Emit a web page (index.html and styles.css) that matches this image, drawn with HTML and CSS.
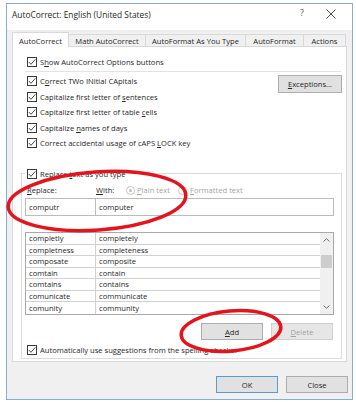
FILE: index.html
```html
<!DOCTYPE html>
<html lang="en">
<head>
<meta charset="utf-8">
<title>AutoCorrect</title>
<link rel="stylesheet" href="styles.css">
</head>
<body>
<div class="dialog">
  <div class="titlebar">
    <span class="title">AutoCorrect: English (United States)</span>
    <span class="help">?</span>
    <span class="xbtn"><svg width="10" height="10" viewBox="0 0 10 10"><path d="M0.5 0.5 L9.5 9.5 M9.5 0.5 L0.5 9.5" stroke="#3a3a3a" stroke-width="0.9" fill="none"/></svg></span>
  </div>
  <div class="client">
    <div class="tabs">
      <div class="tab active tab-ac">AutoCorrect</div>
      <div class="tab tab-math">Math AutoCorrect</div>
      <div class="tab tab-ayt">AutoFormat As You Type</div>
      <div class="tab tab-af">AutoFormat</div>
      <div class="tab tab-act">Actions</div>
    </div>
    <div class="panel">
      <div class="check top-check"><span class="box"><svg width="8" height="8" viewBox="0 0 8 8"><path d="M0.8 4 L3 6.3 L7.3 1.4" stroke="#333" stroke-width="0.9" fill="none"/></svg></span><span>S<u>h</u>ow AutoCorrect Options buttons</span></div>
      <div class="sep"></div>
      <div class="opts">
        <div class="checks">
          <div class="check"><span class="box"><svg width="8" height="8" viewBox="0 0 8 8"><path d="M0.8 4 L3 6.3 L7.3 1.4" stroke="#333" stroke-width="0.9" fill="none"/></svg></span><span>C<u>o</u>rrect TWo INitial CApitals</span></div>
          <div class="check"><span class="box"><svg width="8" height="8" viewBox="0 0 8 8"><path d="M0.8 4 L3 6.3 L7.3 1.4" stroke="#333" stroke-width="0.9" fill="none"/></svg></span><span>Capitalize first letter of <u>s</u>entences</span></div>
          <div class="check"><span class="box"><svg width="8" height="8" viewBox="0 0 8 8"><path d="M0.8 4 L3 6.3 L7.3 1.4" stroke="#333" stroke-width="0.9" fill="none"/></svg></span><span>Capitalize first letter of table <u>c</u>ells</span></div>
          <div class="check"><span class="box"><svg width="8" height="8" viewBox="0 0 8 8"><path d="M0.8 4 L3 6.3 L7.3 1.4" stroke="#333" stroke-width="0.9" fill="none"/></svg></span><span>Capitalize <u>n</u>ames of days</span></div>
          <div class="check"><span class="box"><svg width="8" height="8" viewBox="0 0 8 8"><path d="M0.8 4 L3 6.3 L7.3 1.4" stroke="#333" stroke-width="0.9" fill="none"/></svg></span><span>Correct accidental usage of cAPS <u>L</u>OCK key</span></div>
        </div>
        <button class="btn exc"><u>E</u>xceptions...</button>
      </div>
      <div class="group">
        <div class="check ghead"><span class="box"><svg width="8" height="8" viewBox="0 0 8 8"><path d="M0.8 4 L3 6.3 L7.3 1.4" stroke="#333" stroke-width="0.9" fill="none"/></svg></span><span>Replace <u>t</u>ext as you type</span></div>
        <div class="labels">
          <span class="lbl-r"><u>R</u>eplace:</span>
          <span class="lbl-w"><u>W</u>ith:</span>
          <span class="radio"><span class="dot"></span></span>
          <span class="plain dim"><u>P</u>lain text</span>
          <span class="radio"></span>
          <span class="fmt dim"><u>F</u>ormatted text</span>
        </div>
        <div class="inputs">
          <div class="inp inp1">computr</div>
          <div class="inp inp2">computer</div>
        </div>
        <div class="list">
          <div class="rows">
            <div class="lrow"><span class="c1">completly</span><span class="c2">completely</span></div>
            <div class="lrow"><span class="c1">completness</span><span class="c2">completeness</span></div>
            <div class="lrow"><span class="c1">composate</span><span class="c2">composite</span></div>
            <div class="lrow"><span class="c1">comtain</span><span class="c2">contain</span></div>
            <div class="lrow"><span class="c1">comtains</span><span class="c2">contains</span></div>
            <div class="lrow"><span class="c1">comunicate</span><span class="c2">communicate</span></div>
            <div class="lrow"><span class="c1">comunity</span><span class="c2">community</span></div>
          </div>
          <div class="sbar">
            <span class="sarrow"><svg width="7" height="4" viewBox="0 0 7 4"><path d="M0.5 3.5 L3.5 0.7 L6.5 3.5" stroke="#606060" stroke-width="0.9" fill="none"/></svg></span>
            <span class="track"><span class="thumb"></span></span>
            <span class="sarrow"><svg width="7" height="4" viewBox="0 0 7 4"><path d="M0.5 0.5 L3.5 3.3 L6.5 0.5" stroke="#606060" stroke-width="0.9" fill="none"/></svg></span>
          </div>
        </div>
        <div class="actions">
          <button class="btn"><u>A</u>dd</button>
          <button class="btn disabled"><u>D</u>elete</button>
        </div>
        <div class="check auto"><span class="box"><svg width="8" height="8" viewBox="0 0 8 8"><path d="M0.8 4 L3 6.3 L7.3 1.4" stroke="#333" stroke-width="0.9" fill="none"/></svg></span><span>Automatically use suggestions from the spelling checker</span></div>
      </div>
    </div>
    <div class="footer">
      <button class="btn ok">OK</button>
      <button class="btn">Close</button>
    </div>
  </div>
</div>
<svg class="marks" width="356" height="402" viewBox="0 0 356 402">
  <ellipse cx="97" cy="201" rx="89" ry="29" transform="rotate(-4 97 201)" fill="none" stroke="#e3141c" stroke-width="3.5"/>
  <ellipse cx="231" cy="331" rx="50" ry="20" transform="rotate(-5 231 331)" fill="none" stroke="#e3141c" stroke-width="3.5"/>
</svg>
</body>
</html>
```
FILE: styles.css
```css
* { box-sizing: border-box; }
html, body { margin: 0; padding: 0; }
body {
  width: 356px; height: 402px; overflow: hidden; position: relative;
  background: #fff;
  font-family: "Open Sans", "Noto Sans", sans-serif;
  font-size: 7.6px; color: #262626;
}
u { text-decoration-thickness: 0.6px; text-underline-offset: 1px; }
.dialog {
  margin: 3px 0 0 6px; width: 347px; height: 397px;
  border: 1px solid #86acdb; background: #f0f0f0;
  display: flex; flex-direction: column;
}
.titlebar {
  height: 26px; flex: none; background: #fff;
  display: flex; align-items: flex-start; padding: 5px 0 0 5px;
}
.title { flex: 1; font-size: 8.4px; line-height: 12px; }
.help { width: 12px; text-align: center; font-size: 9px; line-height: 12px; margin: -2px 17px 0 0; color: #555; }
.xbtn { width: 12px; height: 12px; margin: -1px 15px 0 0; display: flex; align-items: center; justify-content: center; }
.client { flex: 1; display: flex; flex-direction: column; }
.tabs { display: flex; align-items: flex-end; height: 14px; margin: 2px 5px 0 5px; flex: none; }
.tab {
  height: 12px; padding-top: 1px; border: 1px solid #d9d9d9; border-bottom: none;
  background: #f0f0f0; display: flex; align-items: center; justify-content: center;
  margin-left: -1px; white-space: nowrap;
}
.tab:first-child { margin-left: 0; }
.tab.active { height: 15px; padding-top: 2px; background: #fff; margin-bottom: -1px; position: relative; z-index: 1; }
.tab-ac { width: 57px; }
.tab-math { width: 78px; }
.tab-ayt { width: 101px; }
.tab-af { width: 59px; }
.tab-act { width: 43px; }
.panel {
  height: 316px; flex: none; margin: 0 5px; border: 1px solid #d9d9d9; background: #fff;
  padding: 7px 4px 0 0; display: flex; flex-direction: column;
}
.check { display: flex; align-items: center; white-space: nowrap; }
.box {
  width: 10px; height: 10px; border: 1px solid #3a3a3a; background: #fff; flex: none;
  display: flex; align-items: center; justify-content: center; margin-right: 3px;
}
.box svg { display: block; }
.top-check { margin-left: 14px; height: 16px; }
.sep { height: 1px; background: #e3e3e3; margin: 1px 1px 0 12px; flex: none; }
.opts { display: flex; align-items: flex-start; margin-top: 1.25px; }
.checks { margin-left: 14px; display: flex; flex-direction: column; }
.checks .check { height: 15.5px; }
.btn {
  font: inherit; color: #262626; height: 17px; width: 62px; padding: 0;
  background: #e1e1e1; border: 1px solid #adadad;
  display: flex; align-items: center; justify-content: center;
}
.exc { width: 64px; height: 18px; margin: 2px 0 0 auto; }
.group {
  margin: 22.25px 0 0 8px; height: 186px; flex: none;
  border: 1px solid #dcdcdc; padding: 0 7px 0 3px;
  display: flex; flex-direction: column;
}
.ghead { align-self: flex-start; margin-top: -8px; height: 16px; background: #fff; padding: 0 2px; }
.labels { display: flex; align-items: center; height: 16px; padding-left: 2px; white-space: nowrap; }
.lbl-r { width: 69px; }
.lbl-w { width: 30px; }
.radio {
  width: 9px; height: 9px; border-radius: 50%; border: 1px solid #c4c4c4; flex: none;
  display: flex; align-items: center; justify-content: center;
}
.dot { width: 3px; height: 3px; border-radius: 50%; background: #bdbdbd; }
.dim { color: #a3a3a3; }
.plain { width: 41px; margin-left: 2px; }
.fmt { margin-left: 3px; }
.inputs { display: flex; height: 18px; flex: none; }
.inp { border: 1px solid #bcbcbc; background: #fff; display: flex; align-items: center; padding-left: 3px; }
.inp1 { width: 71px; }
.inp2 { flex: 1; border-left: none; padding-left: 3px; }
.list { margin-top: 16px; height: 82.5px; flex: none; border: 1px solid #a9a9a9; display: flex; background: #fff; }
.rows { flex: 1; display: flex; flex-direction: column; }
.lrow { display: flex; height: 11.5px; border-bottom: 1px solid #d0d0d0; }
.lrow:last-child { border-bottom: none; }
.c1 { width: 70px; border-right: 1px solid #d0d0d0; padding-left: 3px; display: flex; align-items: center; }
.c2 { flex: 1; padding-left: 3px; display: flex; align-items: center; }
.sbar { width: 13px; background: #f0f0f0; display: flex; flex-direction: column; }
.sarrow { height: 14px; display: flex; align-items: center; justify-content: center; }
.sarrow svg { display: block; }
.track { flex: 1; padding-top: 8px; }
.thumb { display: block; height: 13px; margin: 0 1px; background: #cdcdcd; }
.actions { display: flex; justify-content: flex-end; gap: 8px; margin-top: 8.5px; padding-right: 1px; }
.btn.disabled { color: #a3a3a3; background: #e6e6e6; border-color: #cfcfcf; }
.auto { margin-top: 2px; height: 16px; padding-left: 2px; }
.footer { display: flex; justify-content: flex-end; gap: 8px; padding: 14px 4px 0 0; }
.ok { border-color: #5b9bd5; }
.marks { position: absolute; top: 0; left: 0; pointer-events: none; z-index: 10; }
```
